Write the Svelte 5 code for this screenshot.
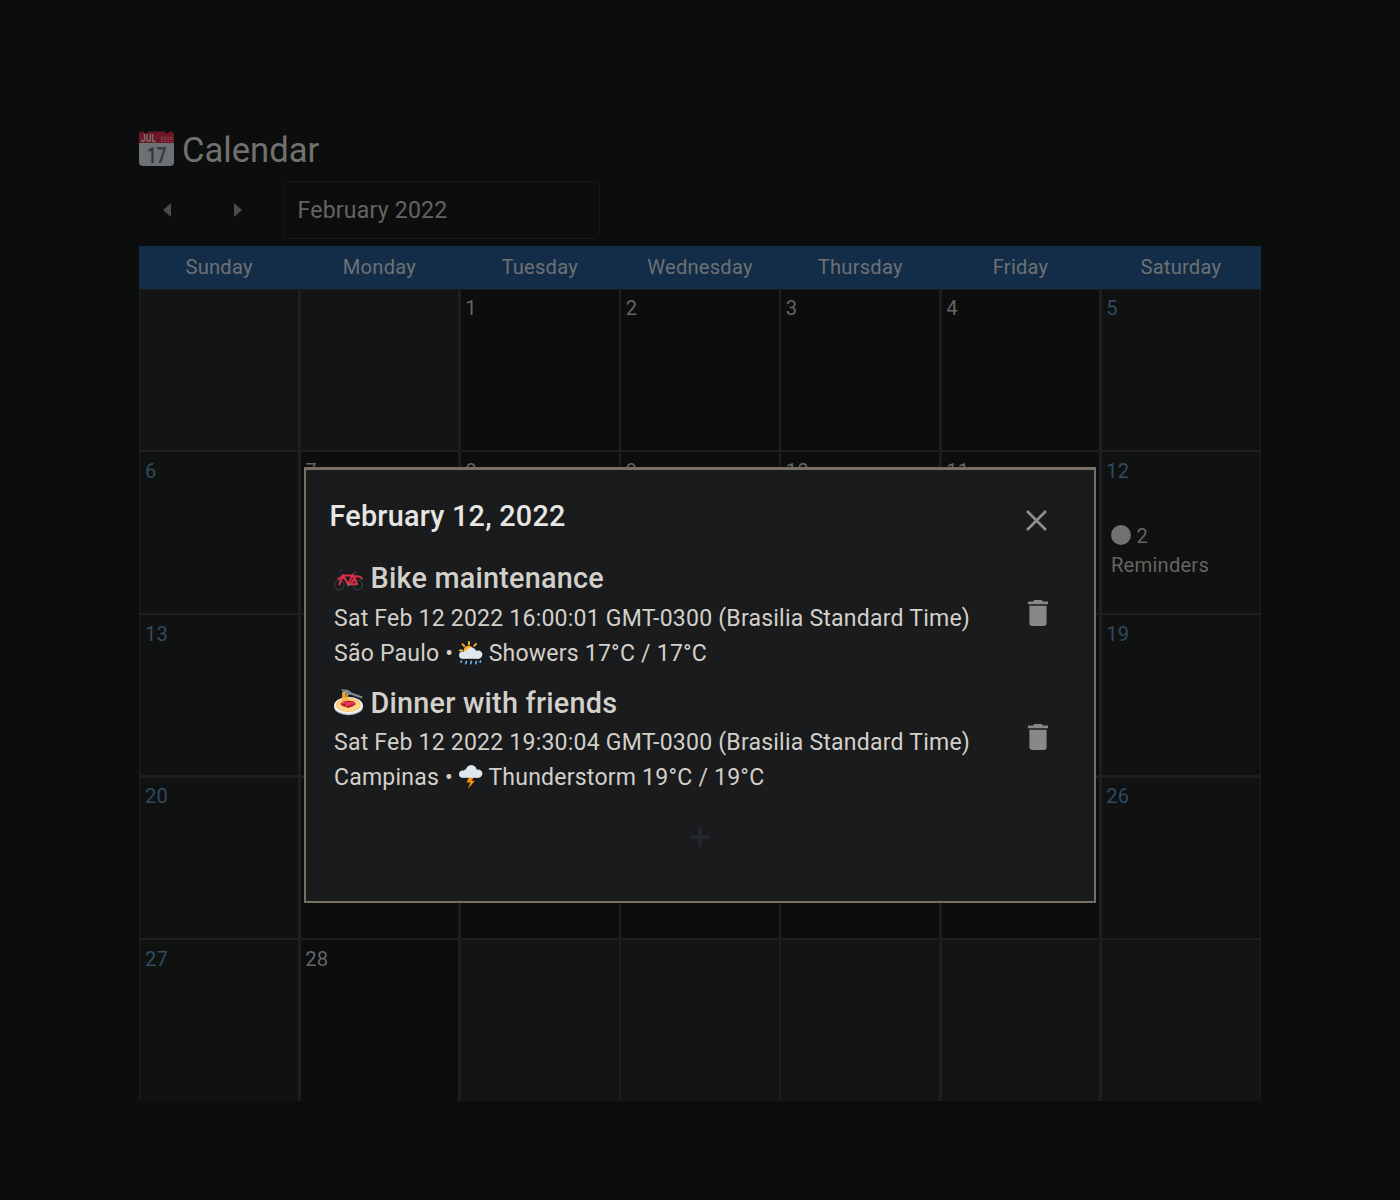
<script>
  const weekdays = ['Sunday', 'Monday', 'Tuesday', 'Wednesday', 'Thursday', 'Friday', 'Saturday'];
  const days = Array.from({ length: 35 }, (_, i) => {
    const day = i - 1;
    return {
      label: day >= 1 && day <= 28 ? day : '',
      weekend: i % 7 === 0 || i % 7 === 6
    };
  });
  const reminders = [
    { icon: 'bike', title: 'Bike maintenance', date: 'Sat Feb 12 2022 16:00:01 GMT-0300 (Brasilia Standard Time)', city: 'São Paulo', sky: 'rain', weather: 'Showers 17°C / 17°C' },
    { icon: 'pasta', title: 'Dinner with friends', date: 'Sat Feb 12 2022 19:30:04 GMT-0300 (Brasilia Standard Time)', city: 'Campinas', sky: 'storm', weather: 'Thunderstorm 19°C / 19°C' }
  ];
</script>

{#snippet emoji(name)}
  {#if name === 'calendar'}
    <svg class="emoji" viewBox="0 0 35 35">
      <path d="M0 11H35V31Q35 35 31 35H4Q0 35 0 31Z" fill="#6e7173" />
      <path d="M0 12V3Q0 .5 3 .5H5Q5 2.5 7 2.5T9 .5H26Q26 2.5 28 2.5T30 .5H32Q35 .5 35 3V12Z" fill="#6d1522" />
      <text x="2" y="10.8" font-size="10" font-weight="700" fill="#777577" textLength="15" lengthAdjust="spacingAndGlyphs">JUL</text>
      <path d="M22 6.3H33.5M22 8.4H33.5M22 10.5H33.5" stroke="#8b4850" stroke-width="1.2" stroke-dasharray="2 1.1" />
      <text x="8" y="31.7" font-size="22" font-weight="700" fill="#343d43" textLength="19.5" lengthAdjust="spacingAndGlyphs">17</text>
    </svg>
  {:else if name === 'bike'}
    <svg class="emoji" viewBox="0 0 29 29">
      <g fill="none" stroke="#30383d" stroke-width="1.3">
        <circle cx="5.3" cy="20" r="4.8" /><circle cx="23.7" cy="20" r="4.8" />
        <path d="M5.3 20L8 9M6 6L9 5.2M23.7 20L20 8M19.5 7.2H23.5" />
      </g>
      <path d="M3.5 14.5Q7 11 10 13M19.5 12.4Q25 9.5 28.3 14.2" fill="none" stroke="#dd2e44" stroke-width="1.9" />
      <path d="M5.3 20L9 10.2L18.5 10.6L14 19L8.5 9.5M18.5 9L23 19.2H14M20.4 13L17 18.8" fill="none" stroke="#dd2e44" stroke-width="2" stroke-linejoin="round" />
      <circle cx="14.5" cy="19.8" r="1.4" fill="#66757f" />
    </svg>
  {:else if name === 'pasta'}
    <svg class="emoji" viewBox="0 0 29 29">
      <ellipse cx="14.5" cy="18" rx="14.4" ry="8.2" fill="#b8c3cb" />
      <ellipse cx="14.5" cy="16.5" rx="14.4" ry="8.4" fill="#f1f3f5" />
      <ellipse cx="14.3" cy="16" rx="12.2" ry="6.7" fill="#ffac33" />
      <ellipse cx="14.3" cy="16.2" rx="11.6" ry="6" fill="#ffd983" />
      <path d="M6 15L9 12.5L14 11.5L20 12.5L22 15L18.5 17.6L14 19L8.5 17Z" fill="#be1931" />
      <path d="M7 15.2Q12 11.5 17 16M11.5 17.5Q15 12.5 20.5 14.5" fill="none" stroke="#e64054" stroke-width="2" />
      <path d="M9 12.5V4Q11 0 11 12M11.5 4Q14 2 13 12" fill="none" stroke="#ffac33" stroke-width="1.7" />
      <path d="M7 .3L13.5 .7Q15.8 1.5 17 3.2L28.6 7.5L27.9 9.5L16.3 5.5Q13.5 6.8 9.5 4.1L13.5 3.9L8 1.9Z" fill="#7b8c97" />
    </svg>
  {:else if name === 'rain'}
    <svg class="emoji" viewBox="0 0 24 24">
      <path d="M10 1V3.5M3.5 3.2L5.2 5M.9 9.5H3.2M17 3L15.2 4.8" stroke="#ffac33" stroke-width="1.9" stroke-linecap="round" />
      <circle cx="9.6" cy="9.8" r="5" fill="#ffac33" />
      <g fill="#e1e8ed">
        <circle cx="3.7" cy="14.2" r="3.6" /><circle cx="7" cy="12.2" r="2.4" />
        <circle cx="12.3" cy="11.6" r="5.2" /><circle cx="19.2" cy="13.6" r="4.2" />
        <path d="M3.7 13H19.5V17.8H3.7Z" />
      </g>
      <path d="M2.4 20L2 21.2M7.3 20.5L6.8 22.6M12.3 20.5L11.8 22.6M17.3 20.5L16.8 22.6M21.6 20L21.2 21.2" stroke="#5dadec" stroke-width="1.8" stroke-linecap="round" />
    </svg>
  {:else}
    <svg class="emoji" viewBox="0 0 24 24">
      <path d="M10.5 11L7.5 17.6H11.4L9 23.8L16 15.8H12.6L15.5 11Z" fill="#f4900c" />
      <g fill="#e1e8ed">
        <circle cx="3.7" cy="9.2" r="3.6" /><circle cx="6.8" cy="6.9" r="2.5" />
        <circle cx="12.3" cy="5.7" r="5.6" /><circle cx="19.2" cy="8.6" r="4.2" />
        <path d="M3.7 8H19.5V12.8H3.7Z" />
      </g>
    </svg>
  {/if}
{/snippet}

<main>
  <h1>{@render emoji('calendar')}<span>Calendar</span></h1>
  <div class="toolbar">
    <button aria-label="Previous month"><svg viewBox="0 0 8 14"><path d="M8 0V14L0 7Z" /></svg></button>
    <button aria-label="Next month"><svg viewBox="0 0 8 14"><path d="M0 0V14L8 7Z" /></svg></button>
    <div class="month">February 2022</div>
  </div>
  <div class="weekdays">
    {#each weekdays as name}<div>{name}</div>{/each}
  </div>
  <div class="grid">
    {#each days as day}
      <div class="cell" class:weekend={day.weekend && day.label} class:blank={!day.label}>
        <span class="num">{day.label}</span>
        {#if day.label === 12}
          <div class="count"><i></i>2<br />Reminders</div>
        {/if}
      </div>
    {/each}
  </div>

  <section class="dialog">
    <header>
      <h2>February 12, 2022</h2>
      <svg class="close" viewBox="0 0 20 20"><path d="M1 1L19 19M19 1L1 19" /></svg>
    </header>
    {#each reminders as r}
      <article>
        <div class="details">
          <h3>{@render emoji(r.icon)}<span>{r.title}</span></h3>
          <p>{r.date}</p>
          <p class="place"><span>{r.city} •</span>{@render emoji(r.sky)}<span>{r.weather}</span></p>
        </div>
        <svg class="trash" viewBox="0 0 20 26"><path d="M0 1.5H5L6.5 0H13.5L15 1.5H20V4.3H0ZM1.4 5.8H18.6V23Q18.6 26 15.7 26H4.3Q1.4 26 1.4 23Z" /></svg>
      </article>
    {/each}
    <svg class="plus" viewBox="0 0 20 20"><path d="M10 1.5V18.5M1.5 10H18.5" /></svg>
  </section>
</main>

<style>
  :global(body) { background: #0b0e0d; }
  main {
    box-sizing: border-box;
    width: 1400px;
    height: 1200px;
    padding: 128px 139px 0;
    background: #0b0e0d;
    color: #6b6967;
    font-family: Roboto, sans-serif;
    overflow: hidden;
  }
  h1, h2, h3, p { margin: 0; }
  .emoji { display: block; flex: none; overflow: visible; }
  h1 { display: flex; height: 44px; font-size: 34.6px; line-height: 45px; font-weight: 400; gap: 8px; color: #737070; }
  h1 .emoji { width: 35px; height: 35px; margin-top: 3px; }
  .toolbar { display: flex; height: 58px; margin-top: 9px; }
  .toolbar button { display: flex; align-items: center; justify-content: center; width: 56px; margin-right: 15px; padding: 0; border: 0; background: none; }
  .toolbar button svg { width: 8px; height: 14px; fill: #4b4b4b; }
  .month { box-sizing: border-box; width: 317px; margin-left: 2px; padding-left: 13.5px; border: 1px solid #171918; border-radius: 5px; line-height: 57px; font-size: 23.04px; letter-spacing: .00938em; color: #656463; }
  .weekdays { display: grid; grid-template-columns: repeat(7, 1fr); height: 43px; margin-top: 7px; background: #132d48; color: #6d7173; font-size: 20.16px; line-height: 43px; text-align: center; letter-spacing: .01071em; }
  .grid { box-sizing: border-box; display: grid; grid-template: 162px 163px 163px 162px 161px / 159px 160px 161px 160px 160px 160px 161px; width: 1122px; height: 812px; border-top: 1px solid #1b1d1d; border-right: 1px solid #1b1d1d; }
  .cell { box-sizing: border-box; border-left: 2px solid #1d1e20; border-bottom: 2px solid #1d1f1f; padding: 6px 0 0 4.8px; background: #0b0d0f; color: #656463; font-size: 20.16px; line-height: 25px; }
  .cell:nth-child(7n + 1) { border-left-width: 1px; padding-left: 5px; }
  .cell:nth-child(7n + 2), .cell:nth-child(7n + 3), .cell:nth-child(7n + 6), .cell:nth-child(7n) { border-left-width: 3px; padding-left: 4.3px; }
  .cell:nth-child(n + 8):nth-child(-n + 21) { padding-top: 7px; }
  .cell:nth-child(n + 15):nth-child(-n + 21) { border-bottom-width: 3px; }
  .cell:nth-child(n + 29) { border-bottom: 0; padding-top: 7px; }
  .blank { background: #131416; }
  .weekend { background: #0f1210; }
  .weekend .num { color: #314a60; }
  .num { display: block; height: 25px; letter-spacing: .01071em; }
  .count { margin: 38px 0 0 4.7px; line-height: 29px; letter-spacing: .01071em; }
  .count i { display: inline-block; width: 20px; height: 20px; margin-right: 5.5px; border-radius: 50%; background: #707271; vertical-align: -2px; }
  .dialog { box-sizing: border-box; position: absolute; left: 304px; top: 467px; width: 792px; height: 436px; padding: 28px 46px 0 24px; border: 2px solid #777062; border-top-width: 3px; background: #1a1b1d; color: #d3cfc9; }
  header { display: flex; justify-content: space-between; height: 60px; }
  h2 { margin-left: -.5px; font-size: 28.8px; line-height: 36px; font-weight: 500; letter-spacing: .0075em; color: #e8e6e3; }
  .close { width: 21px; height: 21px; margin: 12px 1px 0 0; fill: none; stroke: #918e8d; stroke-width: 2.5; }
  article { display: flex; justify-content: space-between; height: 124px; padding-left: 4px; }
  h3 { display: flex; gap: 7.5px; height: 43px; font-size: 28.8px; line-height: 40px; font-weight: 500; letter-spacing: .0075em; }
  article + article h3 { line-height: 42px; }
  h3 .emoji { width: 29px; height: 29px; margin-top: 7px; }
  p { height: 35px; line-height: 35px; font-size: 23.04px; letter-spacing: .00938em; white-space: nowrap; }
  .place { display: flex; gap: 5.7px; }
  .place .emoji { width: 24px; height: 24px; margin-top: 5px; }
  .trash { width: 20px; height: 26px; margin: 42px 0 0; fill: #8a8788; }
  article + article .trash { margin-top: 41.5px; }
  .plus { display: block; width: 20px; height: 20px; margin: 21px 0 0 360px; fill: none; stroke: #25282d; stroke-width: 3.5; stroke-linecap: round; }
</style>
